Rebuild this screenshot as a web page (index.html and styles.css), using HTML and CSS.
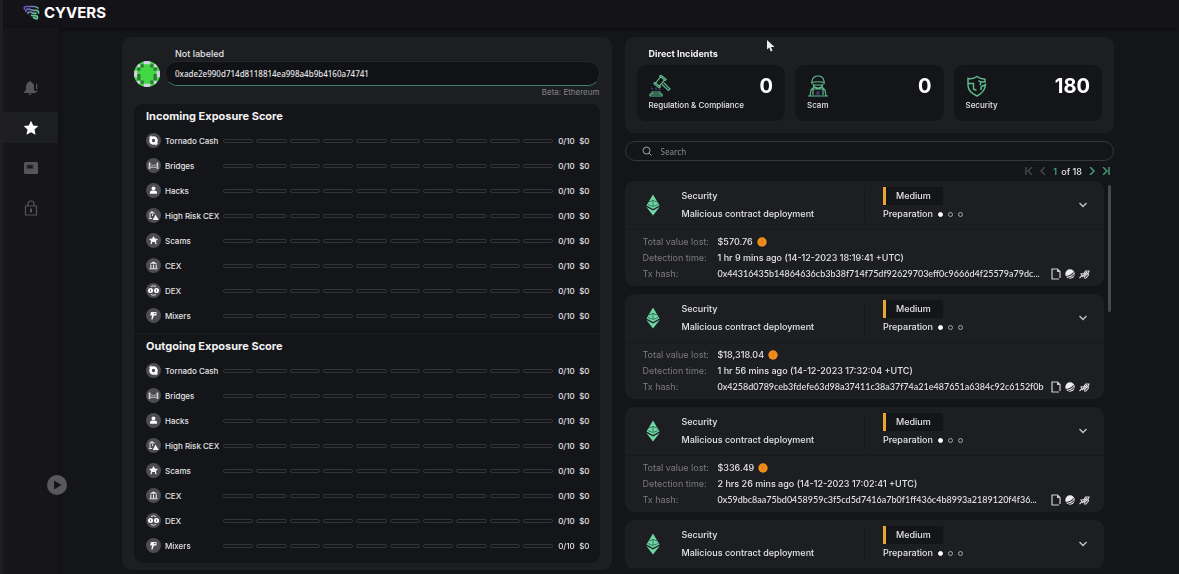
FILE: index.html
```html
<!DOCTYPE html>
<html lang="en">
<head>
    <meta charset="UTF-8">
    <meta name="viewport" content="width=device-width, initial-scale=1.0">
    <title>Cyvers</title>
    <link rel="stylesheet" href="styles.css">
</head>
<body>
    <svg class="sprite" aria-hidden="true">
        <symbol id="i-tornado" viewBox="0 0 15 15"><circle cx="7.5" cy="7.5" r="3" fill="none" stroke="#fff" stroke-width="2.6"/><path d="M3.500 5l2-2M11.500 10l-2 2" stroke="#fff" stroke-width="1.2"/></symbol>
        <symbol id="i-bridges" viewBox="0 0 15 15"><path d="M3.500 4.500v6.500M11.500 4.500v6.500" stroke="#dcdcde" stroke-width="1.600"/><path d="M3.500 5q4 5 8 0M2.500 9.500h10M6 7.500v2M9 7.500v2" fill="none" stroke="#b4b4b7" stroke-width=".9"/></symbol>
        <symbol id="i-hacks" viewBox="0 0 15 15"><circle cx="7.5" cy="5.3" r="1.900" fill="#fff"/><path d="M4 10.800V9.500q0-2 2-2h3q2 0 2 2v1.300z" fill="#fff"/></symbol>
        <symbol id="i-risk" viewBox="0 0 15 15"><path d="M2.500 5.500L6 3l3.500 2.500z" fill="#ddd"/><path d="M4 6v4M6.500 6v2M3 10.500h3" stroke="#ddd" stroke-width="1"/><path d="M9.500 6.500l3.300 5.500H6.700z" fill="#f2f2f2"/></symbol>
        <symbol id="i-scams" viewBox="0 0 15 15"><path d="M7.500 3l1.500 2.500 3 .5-2 2 .5 3.500-1.500-.8V9h-3v1.700l-1.500.8L5 8 3 6l3-.5z" fill="#f2f2f2"/></symbol>
        <symbol id="i-cex" viewBox="0 0 15 15"><path d="M3.500 5.800L7.500 3.500l4 2.300z" fill="#eee"/><path d="M4.800 6.500v3.500M7.500 6.500v3.500M10.200 6.500v3.500M3.500 10.800h8" stroke="#eee" stroke-width="1.100"/></symbol>
        <symbol id="i-dex" viewBox="0 0 15 15"><circle cx="4.500" cy="7.500" r="2.500" fill="#fff"/><circle cx="10.500" cy="7.500" r="2.500" fill="#fff"/><path d="M4.500 6.500v2M10.500 6.500v2" stroke="#55555a"/><path d="M5 3.500q2.500-1.500 5 0M5 11.500q2.500 1.500 5 0" fill="none" stroke="#ddd"/></symbol>
        <symbol id="i-mixers" viewBox="0 0 15 15"><path d="M5 4h5.500v3.500H8L6.500 11.500H5.300L6 7.500H4z" fill="#f2f2f2"/><path d="M8 5.500h1.500" stroke="#55555a"/></symbol>
        <symbol id="i-eth" viewBox="0 0 16 22"><path d="M8 .5l6.500 11L8 15 1.500 11.500z" fill="#6fd6a4"/><path d="M1.200 12.800L8 16.500l6.800-3.700L8 21.500z" fill="#6fd6a4"/><path d="M4 8l4-1.500L12 8M3 10.500l5 2 5-2M8 6v6" fill="none" stroke="#2a6650" stroke-width=".8"/></symbol>
        <symbol id="i-down" viewBox="0 0 10 6"><path d="M1.500 1L5 4.500 8.500 1" fill="none" stroke="#c4c4c7" stroke-width="1.400"/></symbol>
        <symbol id="i-coin" viewBox="0 0 10 10"><circle cx="5" cy="5" r="4.700" fill="#f08c1c"/><path d="M5 2.500v3.200M5 6.500v1" stroke="#d0740f"/></symbol>
        <symbol id="i-copy" viewBox="0 0 10 12"><path d="M3.500 1H1v10h7M3 1h3.500L9 3.500V10" fill="none" stroke="#d0d0d3" stroke-width="1.200"/><path d="M6 1v3h3" fill="#d0d0d3"/></symbol>
        <symbol id="i-scan" viewBox="0 0 10 10"><circle cx="5" cy="5" r="4.700" fill="#ededf0"/><path d="M1 7.500Q6 7 8.500 3.500M3 9.200Q7 8.500 9.300 5.500" fill="none" stroke="#33343a" stroke-width="1.200"/></symbol>
        <symbol id="i-trace" viewBox="0 0 11 10"><path d="M.5 9L3 6.500 2 5l3-.5L6.500 2H10L9 4.500 9.500 6 7 9H5M3 8l5-5M5 8l4-4" fill="none" stroke="#d8d8db" stroke-width="1.100"/></symbol>
    </svg>

    <header class="topbar">
        <a class="brand" href="#">
            <svg width="17" height="15" viewBox="0 0 17 15" fill="none" stroke-width="1.700" stroke-linecap="round" aria-hidden="true">
                <defs>
                    <linearGradient id="logo" gradientUnits="userSpaceOnUse" x1="1" y1="2" x2="14" y2="12">
                        <stop offset="0" stop-color="#7346c4"/>
                        <stop offset=".5" stop-color="#6f8ab0"/>
                        <stop offset=".8" stop-color="#63c592"/>
                    </linearGradient>
                </defs>
                <g stroke="url(#logo)">
                    <path d="M1.500 4Q.5 1.500 3 1.500h7.500q3 0 4.500 1.500"/>
                    <path d="M3 6.500Q2.500 4.200 5 4.200q2 0 3 .600 1.500.8 5 .500 3 0 2.500 2.700"/>
                    <path d="M5 8.500q-.3-1.700 1.500-1.500 1.500.2 3 .900 2 .7 3.500.3"/>
                    <path d="M8.500 10.300q3.500.2 5 .5 1.500.7.5 3-2-.3-3.500-1.300"/>
                </g>
            </svg>
            <span>CYVERS</span>
        </a>
    </header>

    <div class="layout">
        <nav class="sidebar" aria-label="Main">
            <a href="#" aria-label="Alerts">
                <svg width="16" height="16" viewBox="0 0 16 16" fill="#55555a"><path d="M7 1q1 0 1 1 3 1 3 4.500V10l2 2v1H1v-1l2-2V6.500Q3 3 6 2q0-1 1-1zM5.500 13.500h3q0 1.500-1.500 1.500t-1.500-1.500z"/><path d="M13 4h1.200v5H13zM13 10.500h1.200V12H13z"/></svg>
            </a>
            <a href="#" class="active" aria-label="Watchlist">
                <svg width="16" height="16" viewBox="0 0 16 16" fill="#fff"><path d="M8 .8l2.200 4.700 5.100.6-3.800 3.500 1 5.100L8 12.200l-4.500 2.500 1-5.100L.7 6.100l5.100-.6z"/></svg>
            </a>
            <a href="#" aria-label="Reports">
                <svg width="16" height="16" viewBox="0 0 16 16"><rect x="1" y="2" width="14" height="12" rx="1.500" fill="#55555a"/><rect x="4" y="5" width="6" height="3.500" fill="#1a1a1e" stroke="#38383c"/></svg>
            </a>
            <a href="#" aria-label="Access">
                <svg width="16" height="16" viewBox="0 0 16 16" fill="none" stroke="#55555a" stroke-width="1.200"><path d="M2.500 6h11v9h-11zM5 6V4q0-3 3-3t3 3v2"/><path d="M8 8.500v4" stroke-width="2"/></svg>
            </a>
            <button type="button" class="expand" aria-label="Expand menu">
                <svg width="20" height="20" viewBox="0 0 20 20"><circle cx="10" cy="10" r="10" fill="#58585d"/><path d="M7 5.500v9l7.500-4.500z" fill="#16161a"/></svg>
            </button>
        </nav>

        <main class="content">
            <section class="panel exposure">
                <div class="address">
                    <svg class="avatar" viewBox="0 0 8 8" aria-hidden="true">
                        <rect width="8" height="8" fill="#43d843"/>
                        <path d="M3 0h2v1H3zM1 1h1v1H1zM6 1h1v1H6zM0 3h1v2H0zM7 3h1v2H7zM1 6h1v1H1zM6 6h1v1H6zM3 7h2v1H3z" fill="#d9cdea"/>
                        <path d="M2 1h1v1H2zM5 1h1v1H5zM1 2h1v1H1zM6 2h1v1H6zM1 4h1v2H1zM6 4h1v2H6zM2 6h1v1H2zM5 6h1v1H5z" fill="#2a7a35"/>
                    </svg>
                    <div class="address-field">
                        <label for="address">Not labeled</label>
                        <input type="text" id="address" value="0xade2e990d714d8118814ea998a4b9b4160a74741" autofocus>
                        <small>Beta: Ethereum</small>
                    </div>
                </div>
                <div class="scores">
                    <section>
                        <h2>Incoming Exposure Score</h2>
                        <table><tbody class="score-rows"></tbody></table>
                    </section>
                    <section>
                        <h2>Outgoing Exposure Score</h2>
                        <table><tbody class="score-rows"></tbody></table>
                    </section>
                </div>
            </section>

            <section class="incidents">
                <div class="panel summary">
                    <h2>Direct Incidents</h2>
                    <div class="tiles">
                        <div class="tile">
                            <svg width="22" height="22" viewBox="0 0 22 22" fill="none" stroke="#5fb98d" stroke-width="1.200">
                                <g transform="rotate(38 11 6.500)"><path d="M8.500 2.500h5v8h-5zM7.500 1h7v1.500h-7zM7.500 10.500h7V12h-7z"/></g>
                                <path d="M14.500 7.500l6.500 6.500-1.500 1.500L13 9.500M1 21v-2h12v2zM3 19v-2h8v2"/>
                                <path d="M2 13l2 1M7 12.500V15M11 14l-1 1" stroke="#51408c"/>
                            </svg>
                            <strong>0</strong>
                            <span>Regulation &amp; Compliance</span>
                        </div>
                        <div class="tile">
                            <svg width="22" height="22" viewBox="0 0 22 22" fill="none" stroke="#5fb98d" stroke-width="1.200"><path d="M5 9V6q1-5 6-5t6 5v3M4 8q7-2.500 14 0M6 9q1 4 5 4t5-4M7 10h8M3 21l1-6 3-3M19 21l-1-6-3-3M6 20v-6h10v6M1 21h20"/><path d="M10 17h2v2h-2z" stroke="#51408c"/></svg>
                            <strong>0</strong>
                            <span>Scam</span>
                        </div>
                        <div class="tile">
                            <svg width="22" height="22" viewBox="0 0 22 22" fill="none" stroke="#5fb98d" stroke-width="1.500"><path d="M19 4q-4 .5-8-2.500Q7 4.500 2 3.500V10q0 7 9 11 8-4 8.500-11.500L15 12M2 8.500h5.500V14l3 1.500M19 4v3h-4.500l-2-1.500M14.500 7v3.500M15 12v3"/></svg>
                            <strong>180</strong>
                            <span>Security</span>
                        </div>
                    </div>
                </div>

                <div class="search">
                    <svg width="10" height="10" viewBox="0 0 10 10" fill="none" stroke="#a4a4a8"><circle cx="4.500" cy="4.500" r="3.500"/><path d="M7 7l2.500 2.500"/></svg>
                    <input type="text" placeholder="Search" aria-label="Search">
                </div>

                <div class="pager">
                    <button type="button" aria-label="First page" disabled><svg width="8" height="8" viewBox="0 0 8 8"><path d="M1 0v8M7 0L3 4l4 4"/></svg></button>
                    <button type="button" aria-label="Previous page" disabled><svg width="8" height="8" viewBox="0 0 8 8"><path d="M6 0L2 4l4 4"/></svg></button>
                    <span><b>1</b> of 18</span>
                    <button type="button" aria-label="Next page"><svg width="8" height="8" viewBox="0 0 8 8"><path d="M2 0l4 4-4 4"/></svg></button>
                    <button type="button" aria-label="Last page"><svg width="8" height="8" viewBox="0 0 8 8"><path d="M7 0v8M1 0l4 4-4 4"/></svg></button>
                </div>

                <div class="list-wrap">
                    <div class="list" id="list"></div>
                    <div class="scroll-track"><div class="scroll-thumb"></div></div>
                </div>
            </section>
        </main>
    </div>

    <svg class="cursor" width="10" height="12" viewBox="0 0 10 12" aria-hidden="true"><path d="M1 0v9.500l2.200-2 1.600 4 1.700-.700L5 7h3.500z" fill="#eee"/></svg>

    <script src="script.js"></script>
</body>
</html>
```

FILE: styles.css
```css
* {
    margin: 0;
    padding: 0;
    box-sizing: border-box;
}

body {
    display: flex;
    flex-direction: column;
    height: 100vh;
    overflow: hidden;
    border-left: 3px solid #1f1f20;
    background-color: #141519;
    color: #e4e4e6;
    font-family: Inter, "Liberation Sans", sans-serif;
    font-size: 9px;
    font-weight: 500;
}

button, input {
    font: inherit;
    color: inherit;
    background: none;
    border: none;
    outline: none;
}

button {
    display: flex;
    cursor: pointer;
}

a {
    color: inherit;
    text-decoration: none;
}

.sprite {
    position: absolute;
    width: 0;
    height: 0;
}

.topbar {
    flex: none;
    height: 28px;
    padding: 0 20px;
    background-color: #141418;
    box-shadow: 0 1px 3px #0e0e11;
}

.brand {
    display: flex;
    align-items: center;
    gap: 4px;
    height: 25px;
    color: #fff;
    font-size: 15px;
    font-weight: 700;
}

.layout {
    display: flex;
    flex: 1;
    min-height: 0;
}

.sidebar {
    position: relative;
    flex: none;
    width: 55px;
    padding-top: 44px;
    background-color: #16151a;
    box-shadow: 1px 0 4px #101014;
}

.sidebar a {
    display: flex;
    align-items: center;
    justify-content: center;
    height: 31px;
    margin-bottom: 9px;
}

.sidebar a.active {
    background-color: #1d1e22;
}

.expand {
    position: absolute;
    right: -9px;
    bottom: 79px;
}

.content {
    display: grid;
    grid-template-columns: 1fr 1fr;
    gap: 13px;
    flex: 1;
    min-width: 0;
    padding: 9px 65px 6px 64px;
}

.panel {
    border-radius: 9px;
    background-color: #1d1e22;
}

.exposure {
    padding: 9px 12px 7px;
}

.address {
    display: flex;
    align-items: flex-end;
    gap: 5px;
}

.avatar {
    width: 26px;
    height: 26px;
    margin-bottom: 11px;
    border-radius: 50%;
}

.address-field {
    display: flex;
    flex-direction: column;
    flex: 1;
}

.address-field label {
    padding-left: 10px;
    line-height: 15px;
}

.address-field input {
    height: 25px;
    padding: 0 9px;
    border: 1px solid #25262a;
    border-bottom-color: #3f8066;
    border-radius: 13px;
    background-color: #111216;
    font-family: "Noto Sans", sans-serif;
    font-size: 8px;
}

.address-field small {
    color: #85858a;
    font-size: 8px;
    font-weight: 400;
    line-height: 12px;
    text-align: right;
}

.scores {
    margin-top: 6px;
    border-radius: 9px;
    background-color: #141519;
}

.scores section {
    padding: 0 10px 5px 12px;
}

.scores section + section {
    border-top: 1px solid #1b1c20;
}

h2 {
    color: #f2f2f3;
    font-size: 9px;
    font-weight: 700;
}

.scores h2 {
    font-size: 11px;
    line-height: 24px;
}

table {
    width: 100%;
    border-collapse: collapse;
    font-size: 8px;
}

tr {
    height: 25px;
}

th {
    width: 77px;
    font-weight: 500;
    text-align: left;
}

th div {
    display: flex;
    align-items: center;
    gap: 4px;
    white-space: nowrap;
}

th svg {
    flex: none;
    width: 15px;
    height: 15px;
    border-radius: 50%;
    background-color: #4c4c51;
}

.score {
    width: 26px;
    padding-left: 5px;
}

.amount {
    width: 10px;
    text-align: right;
}

.bar {
    display: flex;
    gap: 3px;
}

.bar i {
    flex: 1;
    height: 4px;
    border: 1px solid #333438;
    border-radius: 2px;
}

.incidents {
    display: flex;
    flex-direction: column;
    min-width: 0;
    min-height: 0;
}

.summary {
    padding: 9px 12px 12px;
}

.summary h2 {
    padding-left: 12px;
    line-height: 16px;
}

.tiles {
    display: grid;
    grid-template-columns: repeat(3, 1fr);
    gap: 10px;
    margin-top: 3px;
}

.tile {
    display: grid;
    grid-template-columns: 1fr auto;
    align-items: center;
    padding: 9px 12px 8px;
    border-radius: 9px;
    background-color: #141519;
    font-size: 8px;
}

.tile strong {
    color: #fff;
    font-size: 20px;
    line-height: 24px;
}

.tile span {
    grid-column: 1 / 3;
    line-height: 15px;
}

.search {
    display: flex;
    align-items: center;
    gap: 9px;
    height: 20px;
    margin-top: 8px;
    padding: 0 16px;
    border: 1px solid #36373b;
    border-radius: 10px;
}

.search input {
    flex: 1;
    font-family: "Noto Sans", sans-serif;
    font-size: 8px;
}

.search input::placeholder {
    color: #7d7d82;
}

.pager {
    display: flex;
    align-items: center;
    justify-content: flex-end;
    gap: 6px;
    height: 20px;
    padding-right: 4px;
}

.pager svg {
    fill: none;
    stroke: #46a27c;
    stroke-width: 1.4;
}

.pager button:disabled svg {
    stroke: #4a4a4e;
}

.pager b {
    margin-right: 2px;
    color: #46a27c;
    font-weight: 600;
}

.list-wrap {
    display: flex;
    gap: 4px;
    flex: 1;
    min-height: 0;
    padding-right: 3px;
}

.list {
    flex: 1;
    min-width: 0;
    overflow-y: auto;
    scrollbar-width: none;
}

.scroll-track {
    width: 3px;
    padding-top: 4px;
}

.scroll-thumb {
    height: 33%;
    border-radius: 2px;
    background-color: #48494f;
}

.card {
    margin-bottom: 8px;
    border-radius: 9px;
    background-color: #1d1e22;
}

.card-head {
    display: grid;
    grid-template-columns: 57px 1fr 197px 43px;
    align-items: center;
    height: 49px;
    border-bottom: 1px solid #18191c;
}

.card-head > svg,
.card-head > button {
    justify-self: center;
}

.card-head p {
    line-height: 18px;
}

.risk {
    padding-left: 18px;
    border-left: 1px solid #18191c;
}

.level {
    display: inline-block;
    width: 60px;
    padding-left: 10px;
    border-left: 3px solid #e8a530;
    background-color: #141519;
}

.stage {
    display: flex;
    align-items: center;
    gap: 5px;
}

.stage i {
    width: 5px;
    height: 5px;
    border: 1px solid #a8a8ab;
    border-radius: 50%;
}

.stage i.on {
    border-color: #fff;
    background-color: #fff;
}

.card dl {
    display: grid;
    grid-template-columns: 75px 1fr;
    padding: 4px 14px 4px 18px;
    line-height: 16px;
}

.card dt {
    color: #7b7b80;
    font-weight: 400;
}

.card dd {
    display: flex;
    align-items: center;
    gap: 4px;
    min-width: 0;
}

.card .hash {
    flex: 1;
    font-family: Lato, sans-serif;
    white-space: nowrap;
}

.cursor {
    position: absolute;
    top: 40px;
    left: 766px;
}
```

FILE: script.js
```javascript
var categories = [
    ['tornado', 'Tornado Cash'],
    ['bridges', 'Bridges'],
    ['hacks', 'Hacks'],
    ['risk', 'High Risk CEX'],
    ['scams', 'Scams'],
    ['cex', 'CEX'],
    ['dex', 'DEX'],
    ['mixers', 'Mixers']
];

var incidents = [
    ['$570.76', '1 hr 9 mins ago (14-12-2023 18:19:41 +UTC)', '0x44316435b14864636cb3b38f714f75df92629703eff0c9666d4f25579a79dc...'],
    ['$18,318.04', '1 hr 56 mins ago (14-12-2023 17:32:04 +UTC)', '0x4258d0789ceb3fdefe63d98a37411c38a37f74a21e487651a6384c92c6152f0b'],
    ['$336.49', '2 hrs 26 mins ago (14-12-2023 17:02:41 +UTC)', '0x59dbc8aa75bd0458959c3f5cd5d7416a7b0f1ff436c4b8993a2189120f4f36...'],
    null
];

function icon(name, width, height) {
    return '<svg width="' + width + '" height="' + height + '" aria-hidden="true"><use href="#i-' + name + '"/></svg>';
}

function scoreRow(category) {
    return '<tr><th scope="row"><div>' + icon(category[0], 15, 15) + category[1] + '</div></th>' +
        '<td><div class="bar">' + '<i></i>'.repeat(10) + '</div></td>' +
        '<td class="score">0/10</td><td class="amount">$0</td></tr>';
}

function details(incident) {
    return '<dl><dt>Total value lost:</dt><dd>' + incident[0] + icon('coin', 10, 10) + '</dd>' +
        '<dt>Detection time:</dt><dd>' + incident[1] + '</dd>' +
        '<dt>Tx hash:</dt><dd><span class="hash">' + incident[2] + '</span>' +
        icon('copy', 10, 12) + icon('scan', 10, 10) + icon('trace', 11, 10) + '</dd></dl>';
}

function card(incident) {
    return '<article class="card"><div class="card-head">' + icon('eth', 16, 22) +
        '<div><p>Security</p><p>Malicious contract deployment</p></div>' +
        '<div class="risk"><p class="level">Medium</p><p class="stage">Preparation <i class="on"></i><i></i><i></i></p></div>' +
        '<button type="button" aria-label="Toggle details">' + icon('down', 10, 6) + '</button></div>' +
        (incident ? details(incident) : '') + '</article>';
}

document.querySelectorAll('.score-rows').forEach(function (body) {
    body.innerHTML = categories.map(scoreRow).join('');
});

document.getElementById('list').innerHTML = incidents.map(card).join('');

var address = document.getElementById('address');
address.focus();
address.setSelectionRange(address.value.length, address.value.length);
```
